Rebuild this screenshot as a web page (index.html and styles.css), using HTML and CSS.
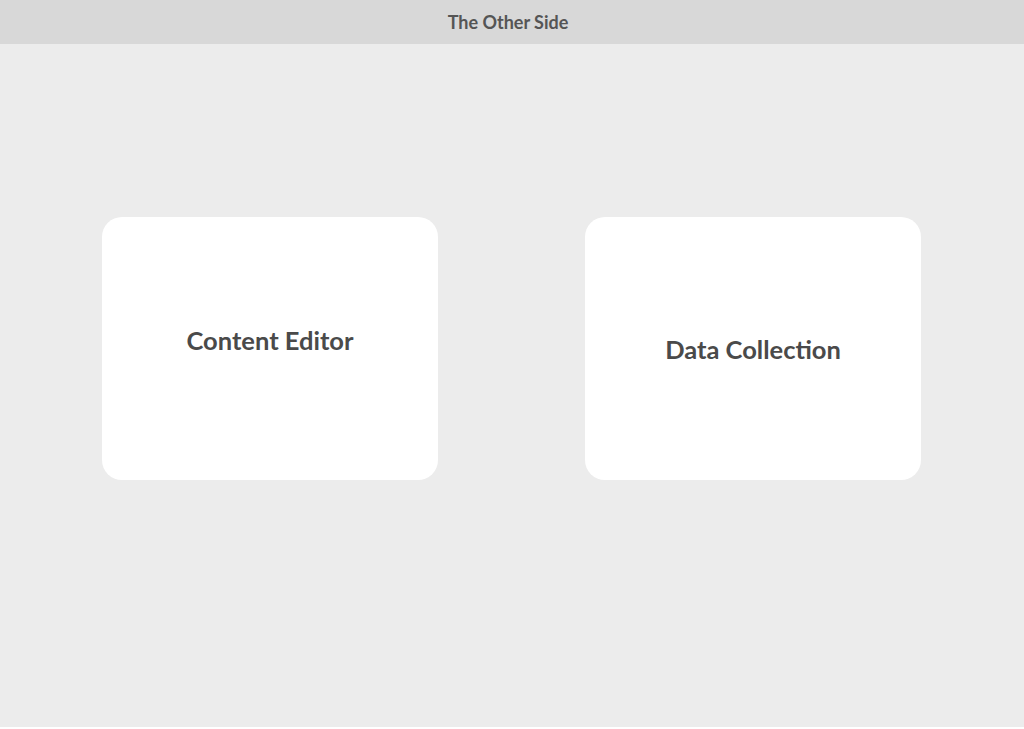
FILE: index.html
```html
<!DOCTYPE html>
<html lang="en">
<head>
    <meta charset="UTF-8">
    <meta name="viewport" content="width=device-width, initial-scale=1.0">
    <title>The Other Side</title>
    <link rel="stylesheet" href="styles.css">
</head>
<body class="body">
    <header class="topbar">
        <h1 class="topbar-title">The Other Side</h1>
    </header>
    <main class="main">
        <div class="cards">
            <a class="card card-editor" href="#">
                <span class="card-label">Content Editor</span>
            </a>
            <a class="card card-data" href="#">
                <span class="card-label">Data Collection</span>
            </a>
        </div>
    </main>
</body>
</html>
```

FILE: styles.css
```css
* {
    box-sizing: border-box;
}

.body {
    margin: 0;
    height: 729px;
    display: flex;
    flex-direction: column;
    background-color: #ffffff;
    font-family: Lato, "Open Sans", sans-serif;
    color: #4a4a4a;
}

.topbar {
    height: 44px;
    background-color: #d8d8d8;
    display: flex;
    align-items: center;
    justify-content: center;
    padding-right: 8px;
}

.topbar-title {
    margin: 0;
    font-size: 18px;
    font-weight: 700;
    color: #555555;
}

.main {
    height: 683px;
    background-color: #ececec;
    padding: 173px 1px 0 0;
}

.cards {
    display: flex;
    justify-content: center;
    gap: 147px;
}

.card {
    width: 336px;
    height: 263px;
    background: #ffffff;
    border-radius: 20px;
    display: flex;
    align-items: center;
    justify-content: center;
    text-decoration: none;
    color: #4a4a4a;
}

.card-editor {
    padding-bottom: 17px;
}

.card-data {
    padding-top: 1px;
}

.card-label {
    font-size: 25.5px;
    font-weight: 700;
}
```
